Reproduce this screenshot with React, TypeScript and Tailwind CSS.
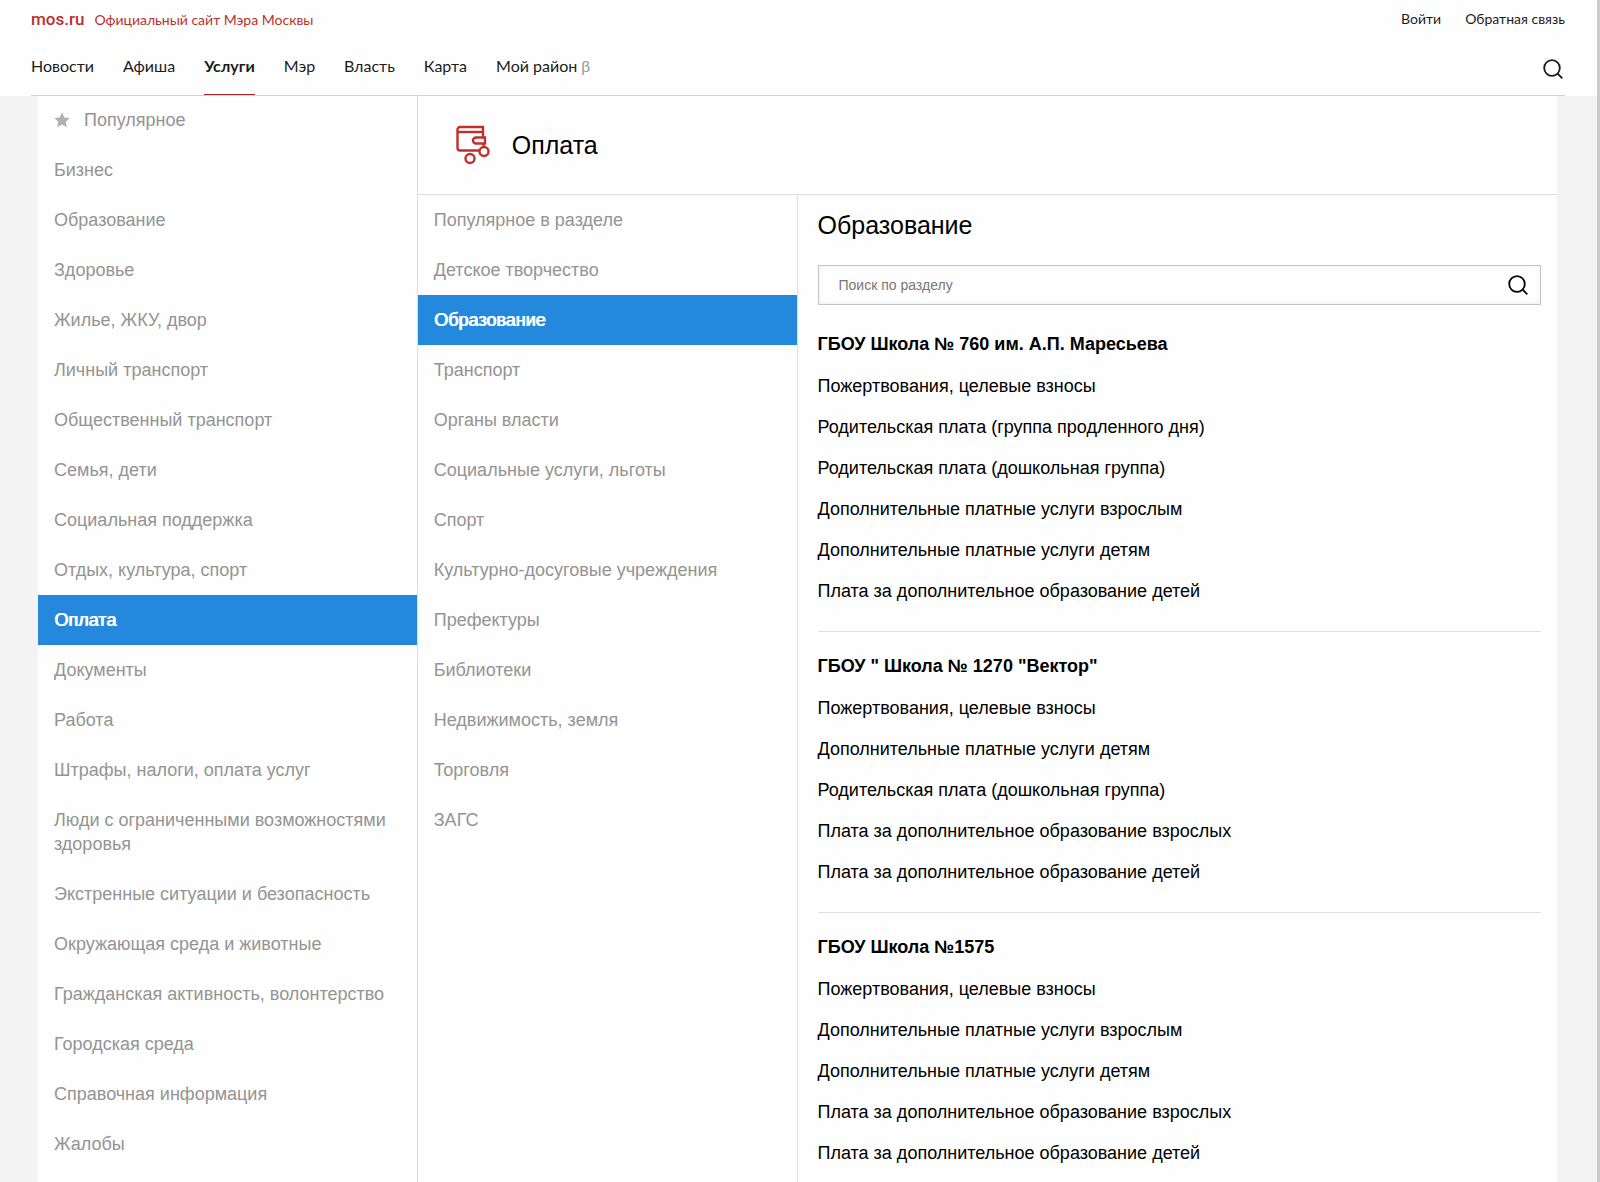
import clsx from "clsx";

const navLinks = ["Новости", "Афиша", "Услуги", "Мэр", "Власть", "Карта", "Мой район"];

const categories = [
  "Популярное",
  "Бизнес",
  "Образование",
  "Здоровье",
  "Жилье, ЖКУ, двор",
  "Личный транспорт",
  "Общественный транспорт",
  "Семья, дети",
  "Социальная поддержка",
  "Отдых, культура, спорт",
  "Оплата",
  "Документы",
  "Работа",
  "Штрафы, налоги, оплата услуг",
  "Люди с ограниченными возможностями здоровья",
  "Экстренные ситуации и безопасность",
  "Окружающая среда и животные",
  "Гражданская активность, волонтерство",
  "Городская среда",
  "Справочная информация",
  "Жалобы",
];

const subcategories = [
  "Популярное в разделе",
  "Детское творчество",
  "Образование",
  "Транспорт",
  "Органы власти",
  "Социальные услуги, льготы",
  "Спорт",
  "Культурно-досуговые учреждения",
  "Префектуры",
  "Библиотеки",
  "Недвижимость, земля",
  "Торговля",
  "ЗАГС",
];

const schools = [
  {
    name: "ГБОУ Школа № 760 им. А.П. Маресьева",
    services: [
      "Пожертвования, целевые взносы",
      "Родительская плата (группа продленного дня)",
      "Родительская плата (дошкольная группа)",
      "Дополнительные платные услуги взрослым",
      "Дополнительные платные услуги детям",
      "Плата за дополнительное образование детей",
    ],
  },
  {
    name: 'ГБОУ " Школа № 1270 "Вектор"',
    services: [
      "Пожертвования, целевые взносы",
      "Дополнительные платные услуги детям",
      "Родительская плата (дошкольная группа)",
      "Плата за дополнительное образование взрослых",
      "Плата за дополнительное образование детей",
    ],
  },
  {
    name: "ГБОУ Школа №1575",
    services: [
      "Пожертвования, целевые взносы",
      "Дополнительные платные услуги взрослым",
      "Дополнительные платные услуги детям",
      "Плата за дополнительное образование взрослых",
      "Плата за дополнительное образование детей",
    ],
  },
];

function SearchIcon() {
  return (
    <svg className="size-5" viewBox="0 0 20 20" fill="none" stroke="currentColor" strokeWidth="1.8" aria-hidden="true">
      <circle cx="9" cy="9" r="7.8" />
      <path d="M14.5 14.5 19.3 19.3" />
    </svg>
  );
}

function StarIcon() {
  return (
    <svg className="size-4 text-[#b0b0b0]" viewBox="0 0 16 16" fill="currentColor" aria-hidden="true">
      <path d="M8 .5l2.3 5 5.4.6-4 3.7 1.1 5.5L8 12.6l-4.8 2.7 1.1-5.5-4-3.7 5.4-.6z" />
    </svg>
  );
}

function WalletIcon() {
  return (
    <svg className="h-10 w-9" viewBox="0 0 36 40" fill="none" stroke="#c0302c" strokeWidth="2.4" aria-hidden="true">
      <path d="M27 12V2H4a2.5 2.5 0 0 0-2.5 2.5V23A2.5 2.5 0 0 0 4 25.5h19.5" />
      <path d="M1.5 7H27" />
      <path d="M29 12.5h-9a3 3 0 0 0 0 6h9z" />
      <path d="M27.5 18.5v3" />
      <circle cx="28" cy="26.500" r="4.500" />
      <circle cx="14" cy="33.500" r="4.500" />
    </svg>
  );
}

function Menu({ label, items, active }: { label: string; items: string[]; active: string }) {
  return (
    <nav aria-label={label}>
      <ul>
        {items.map((item) => (
          <li key={item}>
            <a
              href="#"
              className={clsx(
                "flex items-center gap-3.5 px-4 py-[13px] leading-6",
                item === active
                  ? "bg-[#2489dd] text-white [text-shadow:1px_0_0_white]"
                  : "text-[#949494]"
              )}
            >
              {item === "Популярное" && <StarIcon />}
              {item}
            </a>
          </li>
        ))}
      </ul>
    </nav>
  );
}

function Header() {
  return (
    <header className="bg-[#fefefe] pr-8 pl-[31px] font-['Lato',sans-serif] text-[#1c1c1c]">
      <div className="flex h-[38px] items-center justify-between text-sm">
        <div className="flex items-baseline gap-2.5 text-[#b8312f]">
          <a href="#" className="font-['Roboto',sans-serif] text-[17px] leading-5 font-medium">mos.ru</a>
          <span>Официальный сайт Мэра Москвы</span>
        </div>
        <div className="flex gap-6">
          <a href="#">Войти</a>
          <a href="#">Обратная связь</a>
        </div>
      </div>
      <div className="flex h-[58px] items-stretch justify-between border-b border-[#d2d2d2]">
        <nav aria-label="Основное меню" className="flex gap-[29px] text-base leading-[56px]">
          {navLinks.map((link) => (
            <a
              key={link}
              href="#"
              className={clsx(link === "Услуги" && "border-b border-[#a82a28] font-bold")}
            >
              {link}
              {link === "Мой район" && <span className="text-[#999]"> β</span>}
            </a>
          ))}
        </nav>
        <button type="button" aria-label="Поиск" className="pt-1 pr-0.5">
          <SearchIcon />
        </button>
      </div>
    </header>
  );
}

function SchoolList() {
  return (
    <section className="px-5 pr-4 text-black">
      <h2 className="pt-3 text-[25px] leading-9">Образование</h2>
      <form className="mt-[22px] flex h-10 items-center border border-[#c4c4c4] pr-3 pl-5 shadow-[inset_0_0_5px_#eeeeee]">
        <input
          type="search"
          aria-label="Поиск по разделу"
          placeholder="Поиск по разделу"
          className="min-w-0 flex-1 text-sm outline-none placeholder:text-[#777]"
        />
        <button type="button" aria-label="Найти">
          <SearchIcon />
        </button>
      </form>
      <div className="pt-[18px]">
        {schools.map((school) => (
          <div key={school.name} className="mb-[13px] border-b border-[#dedede] pb-[19px] last:border-0">
            <h3 className="mb-px leading-[42px] font-bold">{school.name}</h3>
            <ul className="leading-[41px]">
              {school.services.map((service) => (
                <li key={service}>
                  <a href="#">{service}</a>
                </li>
              ))}
            </ul>
          </div>
        ))}
      </div>
    </section>
  );
}

export default function App() {
  return (
    <div className="h-screen overflow-hidden border-r-3 border-[#cbcbcb] bg-[#f3f3f3] font-['Liberation_Sans',Arial,sans-serif] text-lg">
      <Header />
      <main className="mr-10 ml-[38px] grid min-h-full grid-cols-[1fr_3fr] bg-[#fefefe]">
        <div className="-mt-px border-r border-[#dedede]">
          <Menu label="Категории услуг" items={categories} active="Оплата" />
        </div>
        <div className="flex flex-col">
          <div className="flex h-[99px] items-center gap-5 border-b border-[#dedede] pl-[38px]">
            <WalletIcon />
            <h1 className="text-[25px] text-black">Оплата</h1>
          </div>
          <div className="grid flex-1 grid-cols-[1fr_2fr]">
            <div className="border-r border-[#dedede]">
              <Menu label="Разделы оплаты" items={subcategories} active="Образование" />
            </div>
            <SchoolList />
          </div>
        </div>
      </main>
    </div>
  );
}
